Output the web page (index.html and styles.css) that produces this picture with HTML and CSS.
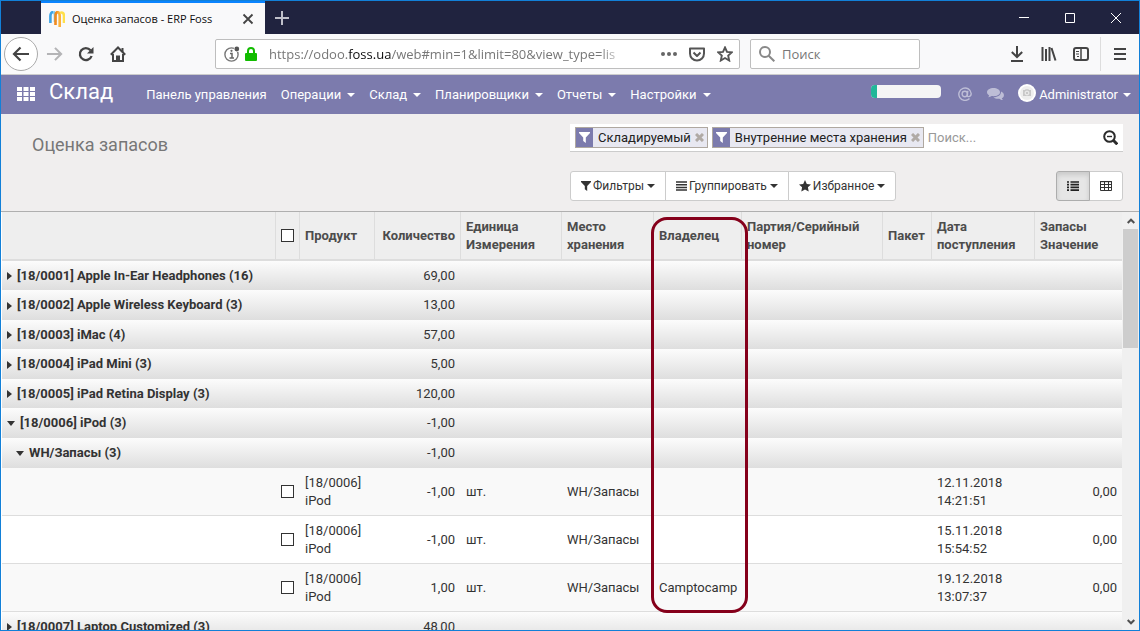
FILE: index.html
```html
<!DOCTYPE html>
<html lang="ru">
<head>
<meta charset="utf-8">
<title>Оценка запасов - ERP Foss</title>
<link rel="stylesheet" href="styles.css">
</head>
<body>
<div class="window">
  <header class="titlebar">
    <div class="tab">
      <svg class="favicon" width="16" height="16" viewBox="0 0 16 16" fill="none" stroke-width="2.6"><path stroke="#3da4e6" d="M1.4 12V5c0-2.500 1.200-4 3-4"/><path stroke="#74c8f2" d="M4.400 1C6 1.500 6 3 6 5v6"/><path stroke="#f08b1f" d="M6.500 14V5c0-2.500 1-4 2.500-4"/><path stroke="#fbb13a" d="M8.500 1c1.800.3 2.200 2 2.200 4v11"/><path stroke="#ffe04a" d="M11 2c2.500-1.500 4 .5 4 3v7"/></svg>
      <span class="tab-title">Оценка запасов - ERP Foss</span>
      <button class="plain" aria-label="Закрыть вкладку"><svg width="12" height="12" viewBox="0 0 12 12" stroke="#444" stroke-width="1.8"><path d="M1.500 1.500l9 9M10.500 1.500l-9 9"/></svg></button>
    </div>
    <button class="plain new-tab" aria-label="Новая вкладка"><svg width="14" height="14" viewBox="0 0 14 14" stroke="#bfc0ca" stroke-width="2"><path d="M7 0v14M0 7h14"/></svg></button>
    <div class="window-buttons">
      <button class="plain" aria-label="Свернуть"><svg width="10" height="10" viewBox="0 0 10 10" stroke="#fff"><path d="M0 4.500h10"/></svg></button>
      <button class="plain" aria-label="Развернуть"><svg width="10" height="10" viewBox="0 0 10 10" fill="none" stroke="#fff"><path d="M.5.5h9v9h-9z"/></svg></button>
      <button class="plain" aria-label="Закрыть"><svg width="10" height="10" viewBox="0 0 10 10" stroke="#fff"><path d="M0 0l10 10M10 0L0 10"/></svg></button>
    </div>
  </header>

  <div class="toolbar">
    <div class="nav-buttons">
      <button class="plain back" aria-label="Назад"><svg width="18" height="16" viewBox="0 0 18 16" fill="none" stroke="#444" stroke-width="2.200"><path d="M17 8H2M8.500 1.500L2 8l6.500 6.500"/></svg></button>
      <button class="plain" aria-label="Вперёд"><svg width="17" height="16" viewBox="0 0 18 16" fill="none" stroke="#b4b4b6" stroke-width="2.200"><path d="M1 8h15M9.500 1.500L16 8l-6.500 6.500"/></svg></button>
      <button class="plain" aria-label="Обновить"><svg width="16" height="16" viewBox="0 0 16 16"><path d="M12.500 4.200A6 6 0 1 0 13.600 10" fill="none" stroke="#444" stroke-width="2.300"/><path d="M15.500 1v6.500H9z" fill="#444"/></svg></button>
      <button class="plain" aria-label="Домой"><svg width="16" height="16" viewBox="0 0 16 16" fill="none" stroke="#444" stroke-width="2"><path d="M.8 8.700L8 1.500l7.200 7.200M3 8v7h10V8"/><path d="M7 15v-4.500h2V15"/><path d="M12.500 2v4"/></svg></button>
    </div>
    <div class="box address">
      <svg width="16" height="16" viewBox="0 0 16 16"><circle cx="7.500" cy="8.500" r="6.600" fill="none" stroke="#777" stroke-width="1.400"/><path d="M6 7.500h2v4.500M5.500 12h4.500" fill="none" stroke="#666" stroke-width="1.500"/><circle cx="7.500" cy="4.800" r="1.100" fill="#666"/><circle cx="12.800" cy="3" r="3" fill="#fff"/><circle cx="12.800" cy="3" r="2.400" fill="#555"/></svg>
      <svg width="12" height="14" viewBox="0 0 12 14"><path d="M3 7V4a3 3 0 0 1 6 0v3" fill="none" stroke="#12bc00" stroke-width="2"/><rect y="6" width="12" height="8" rx="1" fill="#12bc00"/></svg>
      <div class="url" role="textbox" contenteditable="true" spellcheck="false" aria-label="Адрес">https://odoo.<span class="domain">foss.ua</span>/web#min=1&amp;limit=80&amp;view_type=lis</div>
      <button class="plain" aria-label="Действия"><svg width="16" height="4" viewBox="0 0 16 4" fill="#666"><circle cx="2" cy="2" r="2"/><circle cx="8" cy="2" r="2"/><circle cx="14" cy="2" r="2"/></svg></button>
      <button class="plain pocket" aria-label="Pocket"><svg width="16" height="15" viewBox="0 0 16 15" fill="none" stroke="#555" stroke-width="2" stroke-linejoin="round"><path d="M1 1.500h14v5a7 7 0 0 1-14 0z"/><path d="M4.500 5.500L8 9l3.500-3.500"/></svg></button>
      <button class="plain" aria-label="В закладки"><svg width="16" height="16" viewBox="0 0 16 16" fill="none" stroke="#555" stroke-width="1.900"><path d="M8 1.500l2 4.400 4.700.5-3.500 3.200 1 4.900L8 12l-4.200 2.500 1-4.900L1.300 6.400 6 5.900z"/></svg></button>
    </div>
    <div class="box web-search">
      <svg width="16" height="16" viewBox="0 0 16 16" fill="none" stroke="#888" stroke-width="2"><circle cx="6" cy="6" r="5"/><path d="M9.700 9.700l5.600 5.600"/></svg>
      <input type="text" placeholder="Поиск" aria-label="Поиск в интернете">
    </div>
    <div class="tools">
      <button class="plain" aria-label="Загрузки"><svg width="14" height="16" viewBox="0 0 14 16" fill="none" stroke="#444" stroke-width="2"><path d="M7 0v11M1.800 6L7 11l5.200-5M1 15h12"/></svg></button>
      <button class="plain" aria-label="Библиотека"><svg width="16" height="14" viewBox="0 0 16 14" stroke="#444" stroke-width="2"><path d="M1.500 0v14M5 2v12M8.500 0v14M10.500 1l4 12.500"/></svg></button>
      <button class="plain" aria-label="Боковая панель"><svg width="16" height="14" viewBox="0 0 16 14" fill="none" stroke="#444" stroke-width="2"><rect x="1" y="1" width="14" height="12" rx="2"/><path d="M8 1v12" stroke-width="1.500"/><path d="M3 4.500h3M3 7h3M4 9.500h2" stroke-width="1"/></svg></button>
      <button class="plain menu-button" aria-label="Меню"><svg width="12" height="12" viewBox="0 0 12 12" stroke="#444" stroke-width="2"><path d="M0 1h12M0 6h12M0 11h12"/></svg></button>
    </div>
  </div>

  <nav class="navbar">
    <button class="plain apps" aria-label="Приложения"><svg width="18" height="14" viewBox="0 0 18 14" fill="#fff"><path d="M0 0h5v4H0zM6.500 0h5v4h-5zM13 0h5v4h-5zM0 5h5v4H0zM6.500 5h5v4h-5zM13 5h5v4h-5zM0 10h5v4H0zM6.500 10h5v4h-5zM13 10h5v4h-5z"/></svg></button>
    <a class="brand" href="#">Склад</a>
    <div class="menus">
      <a href="#">Панель управления</a>
      <a href="#">Операции<i class="caret"></i></a>
      <a href="#">Склад<i class="caret"></i></a>
      <a href="#">Планировщики<i class="caret"></i></a>
      <a href="#">Отчеты<i class="caret"></i></a>
      <a href="#">Настройки<i class="caret"></i></a>
    </div>
    <div class="systray">
      <div class="progress"><div class="progress-bar" style="width:9%"></div></div>
      <a class="at" href="#" aria-label="Упоминания"><svg width="14" height="14" viewBox="0 0 14 14" fill="none" stroke="#bdbdd6" stroke-width="1.400"><circle cx="6.800" cy="7" r="2.700"/><path d="M9.800 3.800L9.200 8c-.3 2.500 4 2.200 4-1.500A6.200 6.200 0 1 0 11.500 11.500"/></svg></a>
      <a class="chat" href="#" aria-label="Сообщения"><svg width="17" height="14" viewBox="0 0 17 14" fill="#bdbdd6"><path d="M6.500 1C3 1 0 2.800 0 5.200c0 1.300.9 2.500 2.200 3.200-.2.800-.6 1.300-1.200 1.800 1.500 0 2.600-.5 3.600-1.200 4.700.6 8.400-1 8.400-3.800C13 2.800 10 1 6.500 1z"/><path d="M14 4.500c.3 3.200-2.800 5.600-7.500 5.700 1.300 1.400 3.700 1.800 5.900 1.500 1 .8 2.100 1.300 3.600 1.300-.6-.5-1-1-1.200-1.700 3-1.600 2.900-5.300-.8-6.800z"/></svg></a>
      <a class="user" href="#"><svg width="18" height="18" viewBox="0 0 18 18"><circle cx="9" cy="9" r="9" fill="#fff"/><circle cx="9" cy="9" r="7" fill="#eee"/><path d="M5 6h2l.6-.8h2.800L11 6h2v6H5z" fill="#c8c8c8"/><circle cx="9" cy="9" r="1.900" fill="none" stroke="#f2f2f2"/></svg><span>Administrator</span><i class="caret"></i></a>
    </div>
  </nav>

  <section class="control-panel">
    <h1>Оценка запасов</h1>
    <div class="search-view">
      <div class="facet"><span class="facet-icon"><svg width="11" height="11" viewBox="0 0 11 11" fill="#fff"><path d="M0 0h11v1L6.800 5.500V11L4.200 9V5.500L0 1z"/></svg></span><span class="facet-label">Складируемый</span><button class="plain" aria-label="Удалить"><svg width="9" height="9" viewBox="0 0 9 9" stroke="#b0aaa5" stroke-width="3"><path d="M1 1l7 7M8 1L1 8"/></svg></button></div>
      <div class="facet"><span class="facet-icon"><svg width="11" height="11" viewBox="0 0 11 11" fill="#fff"><path d="M0 0h11v1L6.800 5.500V11L4.200 9V5.500L0 1z"/></svg></span><span class="facet-label">Внутренние места хранения</span><button class="plain" aria-label="Удалить"><svg width="9" height="9" viewBox="0 0 9 9" stroke="#b0aaa5" stroke-width="3"><path d="M1 1l7 7M8 1L1 8"/></svg></button></div>
      <input type="text" placeholder="Поиск..." aria-label="Поиск">
      <button class="plain" aria-label="Расширенный поиск"><svg width="15" height="15" viewBox="0 0 15 15" fill="none" stroke="#2b2b2b" stroke-width="2"><circle cx="6.500" cy="6.500" r="5.300"/><path d="M10.300 10.300l4 4" stroke-width="3"/><path d="M4 6.500h5" stroke-width="1.400"/></svg></button>
    </div>
    <div class="filters">
      <button><svg width="10" height="10" viewBox="0 0 11 11" fill="#333"><path d="M0 0h11v1L6.800 5.500V11L4.200 9V5.500L0 1z"/></svg><span>Фильтры</span><i class="caret"></i></button>
      <button><svg width="11" height="10" viewBox="0 0 11 10" stroke="#333" stroke-width="1.500"><path d="M0 1h11M0 3.700h11M0 6.400h11M0 9.100h11"/></svg><span>Группировать</span><i class="caret"></i></button>
      <button><svg width="12" height="12" viewBox="0 0 12 12" fill="#333"><path d="M6 0l1.800 3.900 4.200.5-3.100 2.900.8 4.200L6 9.400l-3.700 2.100.8-4.200L0 4.400l4.200-.5z"/></svg><span>Избранное</span><i class="caret"></i></button>
    </div>
    <div class="view-switch">
      <button class="active" aria-label="Список"><svg width="12" height="10" viewBox="0 0 12 10" stroke="#222" stroke-width="1.700"><path d="M0 1h2M3.500 1H12M0 3.700h2M3.500 3.700H12M0 6.400h2M3.500 6.400H12M0 9.100h2M3.500 9.100H12"/></svg></button>
      <button aria-label="Сводная"><svg width="12" height="10" viewBox="0 0 12 10" fill="none" stroke="#333"><path d="M.5.5h11v9H.5zM0 3.500h12M0 6.500h12M4.500 0v10M8.500 0v10"/><path d="M0 .7h12"/></svg></button>
    </div>
  </section>

  <main class="content">
    <div class="list">
      <table>
        <colgroup><col><col class="w-check"><col class="w-product"><col class="w-qty"><col class="w-unit"><col class="w-place"><col class="w-owner"><col class="w-lot"><col class="w-pack"><col class="w-date"><col class="w-value"></colgroup>
        <thead><tr>
          <th></th><th class="check"><input type="checkbox" aria-label="Выбрать все"></th><th>Продукт</th><th class="num">Количество</th><th>Единица Измерения</th><th>Место хранения</th><th class="owner">Владелец<div class="highlight"></div></th><th>Партия/Серийный номер</th><th>Пакет</th><th>Дата поступления</th><th>Запасы Значение</th>
        </tr></thead>
        <tbody>
          <tr class="group"><th colspan="3"><i class="closed"></i>[18/0001] Apple In-Ear Headphones (16)</th><td class="num">69,00</td><td colspan="7"></td></tr>
          <tr class="group"><th colspan="3"><i class="closed"></i>[18/0002] Apple Wireless Keyboard (3)</th><td class="num">13,00</td><td colspan="7"></td></tr>
          <tr class="group"><th colspan="3"><i class="closed"></i>[18/0003] iMac (4)</th><td class="num">57,00</td><td colspan="7"></td></tr>
          <tr class="group"><th colspan="3"><i class="closed"></i>[18/0004] iPad Mini (3)</th><td class="num">5,00</td><td colspan="7"></td></tr>
          <tr class="group"><th colspan="3"><i class="closed"></i>[18/0005] iPad Retina Display (3)</th><td class="num">120,00</td><td colspan="7"></td></tr>
          <tr class="group"><th colspan="3"><i class="open"></i>[18/0006] iPod (3)</th><td class="num">-1,00</td><td colspan="7"></td></tr>
          <tr class="group nested"><th colspan="3"><i class="open"></i>WH/Запасы (3)</th><td class="num">-1,00</td><td colspan="7"></td></tr>
          <tr class="item"><td></td><td class="check"><input type="checkbox" aria-label="Выбрать строку"></td><td>[18/0006] iPod</td><td class="num">-1,00</td><td>шт.</td><td>WH/Запасы</td><td></td><td></td><td></td><td>12.11.2018 14:21:51</td><td class="num">0,00</td></tr>
          <tr class="item alt"><td></td><td class="check"><input type="checkbox" aria-label="Выбрать строку"></td><td>[18/0006] iPod</td><td class="num">-1,00</td><td>шт.</td><td>WH/Запасы</td><td></td><td></td><td></td><td>15.11.2018 15:54:52</td><td class="num">0,00</td></tr>
          <tr class="item"><td></td><td class="check"><input type="checkbox" aria-label="Выбрать строку"></td><td>[18/0006] iPod</td><td class="num">1,00</td><td>шт.</td><td>WH/Запасы</td><td>Camptocamp</td><td></td><td></td><td>19.12.2018 13:07:37</td><td class="num">0,00</td></tr>
          <tr class="group"><th colspan="3"><i class="closed"></i>[18/0007] Laptop Customized (3)</th><td class="num">48,00</td><td colspan="7"></td></tr>
        </tbody>
      </table>
    </div>
    <div class="scrollbar">
      <button class="plain" aria-label="Вверх"><svg width="8" height="6" viewBox="0 0 8 6" fill="none" stroke="#505050" stroke-width="2"><path d="M.7 5L4 1.700 7.300 5"/></svg></button>
      <div class="track"><div class="thumb"></div></div>
      <button class="plain" aria-label="Вниз"><svg width="8" height="6" viewBox="0 0 8 6" fill="none" stroke="#505050" stroke-width="2"><path d="M.7 1L4 4.300 7.300 1"/></svg></button>
    </div>
  </main>
</div>
</body>
</html>
```

FILE: styles.css
```css
* { box-sizing: border-box; }
body { margin: 0; font: 13px/18px Roboto, "Liberation Sans", sans-serif; color: #333; }
a { color: inherit; text-decoration: none; }
svg { display: block; flex: none; }
button, input { font: inherit; color: inherit; }
.plain { display: flex; align-items: center; justify-content: center; padding: 0; border: 0; background: none; }
.window { display: flex; flex-direction: column; height: 100vh; overflow: hidden; border: 1px solid #1280d8; background: #f0eeee; }

.titlebar { display: flex; flex: none; height: 33px; padding-left: 40px; background: #20233f; }
.tab { display: flex; align-items: center; width: 224px; padding: 1px 11px 0 8px; border-top: 2px solid #0a84ff; background: #f9f9fa; color: #0c0c0d; }
.favicon { margin-right: 7px; }
.tab-title { flex: 1; white-space: nowrap; font-family: "Open Sans", sans-serif; font-size: 11px; }
.new-tab { width: 34px; }
.window-buttons { display: flex; margin-left: auto; }
.window-buttons button { width: 46px; }

.toolbar { display: flex; flex: none; align-items: center; height: 41px; padding-left: 3px; border-bottom: 1px solid #ccc; background: #f9f9fa; font-family: "Open Sans", sans-serif; }
.nav-buttons { display: flex; align-items: center; }
.nav-buttons button { width: 32px; height: 34px; }
.nav-buttons .back { width: 34px; border: 1px solid #aaa; border-radius: 50%; background: #fff; }
.box { display: flex; align-items: center; height: 30px; border: 1px solid #bebebe; border-radius: 2px; background: #fff; }
.address { flex: 1; margin-left: 81px; padding: 0 3px 0 8px; gap: 5px; min-width: 0; }
.url { flex: 1; min-width: 0; margin: 0 24px 0 7px; overflow: hidden; white-space: nowrap; color: #777; outline: 0; mask-image: linear-gradient(to right, #000 92%, transparent); }
.domain { color: #0c0c0d; }
.address button { width: 23px; height: 24px; }
.web-search { width: 170px; margin-left: 10px; padding: 0 8px; gap: 6px; }
.web-search input { min-width: 0; width: 100%; padding: 0 1px; border: 0; outline: 0; background: none; }
.web-search input::placeholder { color: #777; opacity: 1; }
.tools { display: flex; align-items: center; margin-left: 81px; }
.tools button { width: 32px; height: 34px; }
.tools .menu-button { width: 39px; margin-left: 3px; border-left: 1px solid #ddd; }

.navbar { display: flex; flex: none; align-items: center; height: 39px; padding: 0 8px 0 16px; background: #7c7bad; color: #fff; }
.apps { padding-bottom: 2px; }
.brand { margin: 0 33px 6px 14px; font-size: 22px; line-height: 28px; }
.menus { display: flex; gap: 14px; white-space: nowrap; }
.caret { display: inline-block; margin-left: 6px; border: 4px solid transparent; border-top-color: currentColor; border-bottom: 0; vertical-align: middle; }
.systray { display: flex; align-items: center; margin-left: auto; }
.progress { width: 70px; height: 13px; margin: 0 17px 6px 0; border-radius: 4px; overflow: hidden; background: #f5f5f5; }
.progress-bar { height: 100%; background: #21b799; }
.at { margin: 0 15px 2px 0; }
.chat { margin: 0 14px 2px 0; }
.user { display: flex; align-items: center; }
.user svg { margin: 0 3px 4px 0; }
.user .caret { margin-left: 5px; }

.control-panel { display: grid; flex: none; grid-template-columns: 538px 1fr auto; row-gap: 13px; align-items: start; align-content: start; height: 98px; padding: 10px 16px 0 31px; border-bottom: 1px solid #afafaf; }
h1 { margin: 8px 0 0; font-size: 18px; line-height: 26px; font-weight: 400; color: #777; }
.search-view { grid-column: 2 / 4; display: flex; align-items: center; height: 28px; padding: 0 5px; gap: 4px; border-bottom: 1px solid #ccc; background: #fff; }
.facet { display: flex; flex: none; align-items: center; height: 21px; padding-right: 3px; border: 1px solid #afa8a0; background: #e8e8f1; color: #222; }
.facet-icon { display: flex; align-items: center; justify-content: center; align-self: stretch; width: 17px; background: #7c7bad; }
.facet-label { margin: 0 4px 0 5px; white-space: nowrap; }
.search-view input { flex: 1; min-width: 0; padding: 0; border: 0; outline: 0; }
.search-view input::placeholder { color: #999; opacity: 1; }
.filters { grid-column: 2; display: flex; }
.filters button, .view-switch button { display: flex; align-items: center; height: 30px; padding: 0 10px; border: 1px solid #ccc; background: #fff; font-size: 12px; white-space: nowrap; }
.filters button + button, .view-switch button + button { margin-left: -1px; }
.filters button:first-child, .view-switch button:first-child { border-radius: 3px 0 0 3px; }
.filters button:last-child, .view-switch button:last-child { border-radius: 0 3px 3px 0; }
.filters span { margin-left: 2px; }
.filters .caret { margin-left: 3px; }
.view-switch { display: flex; }
.view-switch .active { position: relative; width: 34px; border-color: #adadad; background: #e6e6e6; box-shadow: inset 0 3px 5px rgba(0, 0, 0, .125); }

.content { display: flex; flex: 1; min-height: 0; }
.list { flex: 1; min-width: 0; padding-left: 1px; overflow: hidden; background: #fff; }
table { width: 100%; table-layout: fixed; border-spacing: 0; }
.w-check { width: 24px; }
.w-product { width: 75px; }
.w-qty { width: 86px; }
.w-unit { width: 101px; }
.w-place { width: 92px; }
.w-owner { width: 88px; }
.w-lot { width: 141px; }
.w-pack { width: 49px; }
.w-date { width: 103px; }
.w-value { width: 88px; }
th, td { padding: 0 5px 0 6px; text-align: left; vertical-align: middle; }
thead th { height: 49px; border-left: 1px solid #ddd; border-bottom: 2px solid #ddd; background: #eee; color: #4c4c4c; padding: 0 0 0 5px; }
thead th:first-child { border-left: 0; }
.num, thead .num { padding-right: 5px; text-align: right; }
.check, thead .check { padding: 0; text-align: center; }
.check input { appearance: none; display: block; width: 13px; height: 13px; margin: 0 auto; border: 1px solid #333; background: #fff; }
.group { height: 29px; background: linear-gradient(#fcfcfc, #dedede); }
.group:nth-child(even), .nested { height: 30px; }
.group th { padding-left: 5px; white-space: nowrap; }
.nested th { padding-left: 14px; }
.closed, .open { display: inline-block; border: 4px solid transparent; vertical-align: middle; }
.closed { margin-right: 5px; border-left: 5px solid #333; border-right: 0; }
.open { margin-right: 5px; border-top: 5px solid #333; border-bottom: 0; }
.item { height: 48px; background: #f9f9f9; }
.item.alt { background: #fff; }
.item td { border-bottom: 1px solid #ddd; }
.owner { position: relative; }
.highlight { position: absolute; z-index: 1; top: 5px; left: -3px; width: 97px; height: 396px; border: 3px solid #85001b; border-radius: 16px; pointer-events: none; }
.scrollbar { display: flex; flex: none; flex-direction: column; width: 17px; padding: 0 1px; background: #f0f0f0; }
.scrollbar button { height: 17px; }
.track { flex: 1; }
.thumb { height: 31%; background: #cdcdcd; }
```
